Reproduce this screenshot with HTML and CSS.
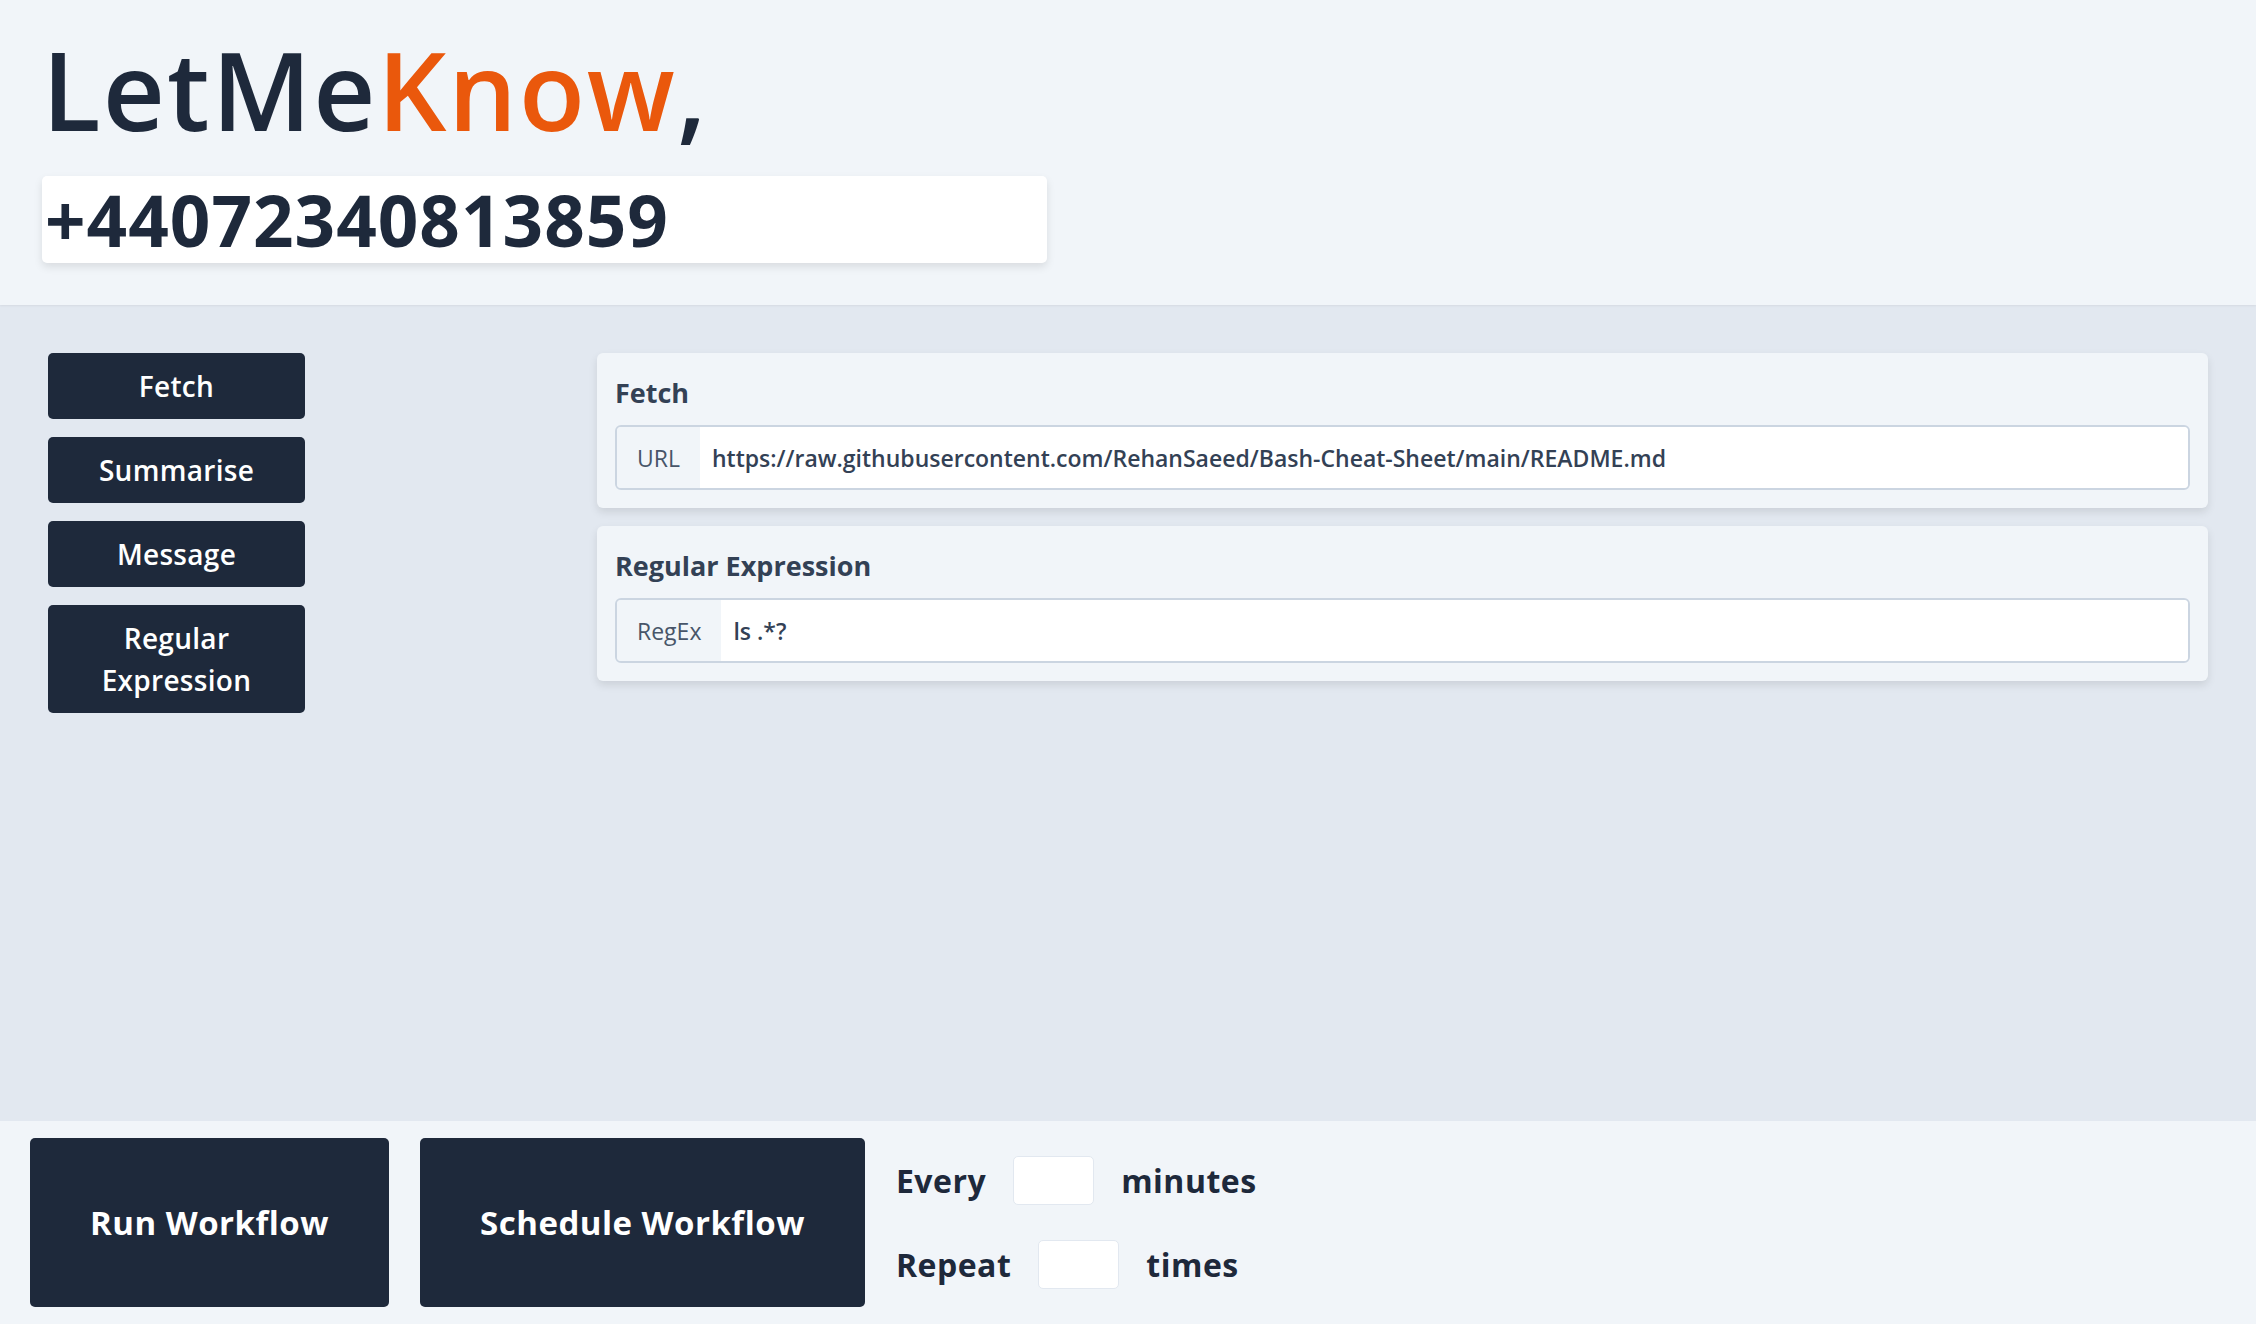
FILE: index.html
```html
<!DOCTYPE html>
<html lang="en">
<head>
  <meta charset="UTF-8" />
  <meta name="viewport" content="width=device-width, initial-scale=1.0" />
  <title>LetMeKnow</title>
  <link rel="stylesheet" href="styles.css">
</head>
<body>
  <header class="top">
    <h1 class="brand">LetMe<span class="accent">Know</span>,</h1>
    <input class="phone" type="text" value="+44072340813859" />
  </header>

  <main class="workspace">
    <aside class="palette">
      <button class="step-btn">Fetch</button>
      <button class="step-btn">Summarise</button>
      <button class="step-btn">Message</button>
      <button class="step-btn">Regular Expression</button>
    </aside>

    <section class="steps">
      <div class="card">
        <h2 class="card-title">Fetch</h2>
        <div class="input-group">
          <span class="addon">URL</span>
          <input class="field" type="text" value="https://raw.githubusercontent.com/RehanSaeed/Bash-Cheat-Sheet/main/README.md" />
        </div>
      </div>
      <div class="card">
        <h2 class="card-title">Regular Expression</h2>
        <div class="input-group">
          <span class="addon">RegEx</span>
          <input class="field" type="text" value="ls .*?" />
        </div>
      </div>
    </section>
  </main>

  <footer class="actions">
    <button class="big-btn">Run Workflow</button>
    <button class="big-btn">Schedule Workflow</button>
    <div class="schedule">
      <label class="sched-row">Every <input class="small-input" type="text" /> minutes</label>
      <label class="sched-row">Repeat <input class="small-input" type="text" /> times</label>
    </div>
  </footer>
</body>
</html>
```

FILE: styles.css
```css
:root {
  --dark: #1e293b;
  --panel: #f1f5f9;
  --canvas: #e2e8f0;
  --border: #cbd5e1;
  --orange: #ea580c;
}
* {
  box-sizing: border-box;
}
html, body {
  height: 100%;
}
body {
  margin: 0;
  font-family: 'Open Sans', Lato, sans-serif;
  color: var(--dark);
  display: flex;
  flex-direction: column;
  background: var(--panel);
}

/* header */
.top {
  background: var(--panel);
  padding: 25px 42px 42px;
  box-shadow: 0 1px 2px rgba(0, 0, 0, 0.06);
  position: relative;
  z-index: 1;
}
.brand {
  margin: 0;
  font-size: 108px;
  font-weight: 600;
  line-height: 130px;
  letter-spacing: 2px;
}
.accent {
  color: var(--orange);
}
.phone {
  display: block;
  margin-top: 21px;
  width: 1005px;
  height: 87px;
  padding: 0 3px;
  border: none;
  border-radius: 5px;
  background: #fff;
  box-shadow: 0 4px 8px rgba(0, 0, 0, 0.1);
  font-family: inherit;
  font-size: 71px;
  font-weight: 700;
  letter-spacing: 1px;
  color: var(--dark);
  outline: none;
}

/* main area */
.workspace {
  flex: 1;
  display: flex;
  padding: 48px;
  background: var(--canvas);
}
.palette {
  width: 549px;
  flex: none;
  display: flex;
  flex-direction: column;
  align-items: flex-start;
  gap: 18px;
}
.step-btn {
  width: 257px;
  padding: 12px;
  border: none;
  border-radius: 5px;
  background: var(--dark);
  color: #fff;
  font-family: inherit;
  font-size: 28px;
  font-weight: 600;
  line-height: 42px;
  letter-spacing: 0.3px;
  cursor: pointer;
}
.steps {
  flex: 1;
  display: flex;
  flex-direction: column;
  gap: 18px;
}
.card {
  background: var(--panel);
  border-radius: 6px;
  padding: 18px;
  box-shadow: 0 4px 8px rgba(0, 0, 0, 0.1);
}
.card-title {
  margin: 0 0 10px;
  font-size: 27px;
  font-weight: 700;
  line-height: 44px;
  color: #334155;
}
.input-group {
  display: flex;
  height: 65px;
  border: 2px solid var(--border);
  border-radius: 6px;
  overflow: hidden;
}
.addon {
  display: flex;
  align-items: center;
  padding: 0 20px;
  background: var(--panel);
  font-size: 23px;
  color: #475569;
}
.field {
  flex: 1;
  border: none;
  padding: 0 12px;
  background: #fff;
  font-family: inherit;
  font-size: 23px;
  font-weight: 600;
  color: #334155;
  outline: none;
}

/* footer */
.actions {
  display: flex;
  gap: 31px;
  height: 203px;
  padding: 17px 30px;
  background: var(--panel);
}
.big-btn {
  padding: 0 60px;
  border: none;
  border-radius: 5px;
  background: var(--dark);
  color: #fff;
  font-family: inherit;
  font-size: 33px;
  font-weight: 700;
  letter-spacing: 0.5px;
  cursor: pointer;
}
.schedule {
  display: flex;
  flex-direction: column;
  justify-content: center;
  gap: 35px;
}
.sched-row {
  display: flex;
  align-items: center;
  gap: 27px;
  font-size: 32px;
  font-weight: 700;
  letter-spacing: 0.5px;
}
.small-input {
  width: 81px;
  height: 49px;
  border: 1px solid var(--canvas);
  border-radius: 5px;
  background: #fff;
  outline: none;
}
```
